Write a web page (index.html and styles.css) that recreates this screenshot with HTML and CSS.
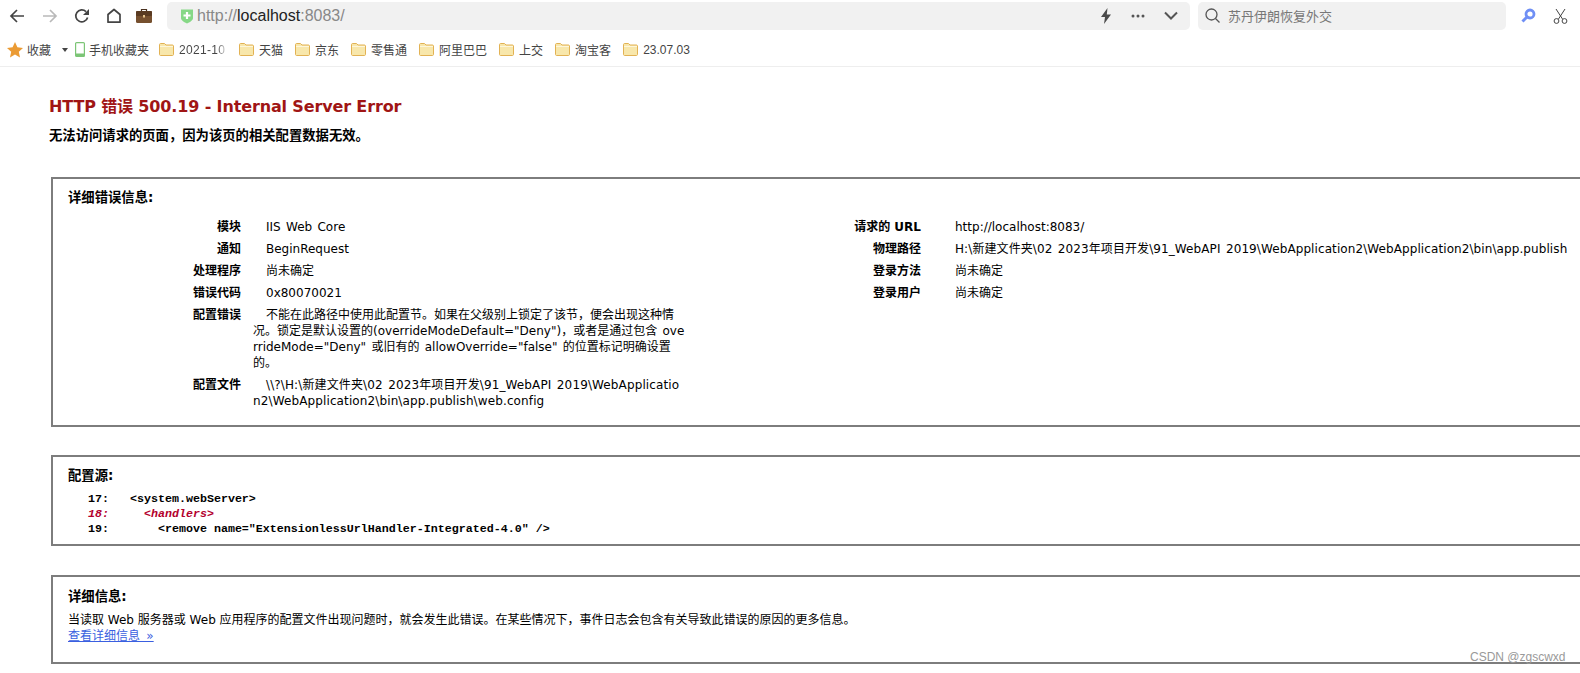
FILE: index.html
```html
<!DOCTYPE html>
<html lang="zh-CN">
<head>
<meta charset="utf-8">
<title>IIS 详细错误 - 500.19 - Internal Server Error</title>
<link rel="stylesheet" href="styles.css">
</head>
<body>
<svg class="defs" width="0" height="0" aria-hidden="true"><symbol id="folder" viewBox="0 0 15 13"><path d="M.5 1.500C.5 1 1 .5 1.500.5h4L7 2h6.500c.5 0 1 .5 1 1v8.500c0 .5-.5 1-1 1h-12c-.5 0-1-.5-1-1z" fill="#f8e7ab" stroke="#e2b254"/><path d="M1 3.500h13" stroke="#fdf6dc"/></symbol></svg>
<header class="chrome">
  <div class="toolbar">
    <svg class="nav nav-back" viewBox="0 0 16 16"><path d="M15 8H2M8 2 2 8l6 6" fill="none" stroke="#444" stroke-width="1.7"/></svg>
    <svg class="nav nav-forward" viewBox="0 0 16 16"><path d="M1 8h13M8 2l6 6-6 6" fill="none" stroke="#b9b9b9" stroke-width="1.7"/></svg>
    <svg class="nav nav-reload" viewBox="0 0 16 16"><path d="M13.600 9.500A6 6 0 1 1 12 3.600" fill="none" stroke="#444" stroke-width="1.7"/><path d="M15 1v6H9z" fill="#444"/></svg>
    <svg class="nav nav-home" viewBox="0 0 16 16"><path d="M2 14.200V6.500L8 1.500l6 5v7.700z" fill="none" stroke="#444" stroke-width="1.7" stroke-linejoin="round"/></svg>
    <svg class="nav nav-case" viewBox="0 0 16 16"><path d="M5.500 3V1.500h5V3" fill="none" stroke="#4a3220" stroke-width="1.200"/><rect x="0" y="3" width="16" height="12" rx="1.500" fill="#76502f"/><rect x="0" y="3" width="16" height="5" rx="1" fill="#5a3b22"/><rect x="7" y="7" width="2" height="2.500" fill="#e6c48c"/></svg>
    <div class="address">
      <svg class="shield" viewBox="0 0 14 16"><path d="M1 1.500h12v8.500c0 2.500-3.500 4.500-6 5.500-2.500-1-6-3-6-5.500z" fill="#86d886"/><path d="M7 4v7M3.500 7.500h7" stroke="#fff" stroke-width="2.200"/></svg>
      <span class="url"><span class="url-dim">http://</span>localhost<span class="url-dim">:8083/</span></span>
      <svg class="addr-icon addr-bolt" viewBox="0 0 12 16"><path d="M7.500 0 1 9h4l-1 7 7-9.500H6.800z" fill="#4a4a4a"/></svg>
      <svg class="addr-icon addr-dots" viewBox="0 0 14 4"><circle cx="2" cy="2" r="1.500" fill="#555"/><circle cx="7" cy="2" r="1.500" fill="#555"/><circle cx="12" cy="2" r="1.500" fill="#555"/></svg>
      <svg class="addr-icon addr-chev" viewBox="0 0 14 9"><path d="M1 1.500l6 6 6-6" fill="none" stroke="#555" stroke-width="2"/></svg>
    </div>
    <div class="search">
      <svg class="search-glass" viewBox="0 0 15 15"><circle cx="6.500" cy="6.500" r="5.500" fill="none" stroke="#555" stroke-width="1.300"/><path d="M10.500 10.500 14.500 14.500" stroke="#555" stroke-width="1.300"/></svg>
      <span class="search-text">苏丹伊朗恢复外交</span>
    </div>
    <svg class="tool tool-find" viewBox="0 0 15 15"><circle cx="9" cy="6" r="4" fill="none" stroke="#6f8ff5" stroke-width="2.800"/><path d="M6 9 1.500 13.500" stroke="#6f8ff5" stroke-width="3"/></svg>
    <svg class="tool tool-cut" viewBox="0 0 15 16"><path d="M3 1l6.500 10M12 1 5.500 11" fill="none" stroke="#444"/><circle cx="3.500" cy="13" r="2.400" fill="none" stroke="#444"/><circle cx="11.500" cy="13" r="2.400" fill="none" stroke="#444"/></svg>
  </div>
  <nav class="bookmarks">
    <svg class="star" viewBox="0 0 16 16"><path d="M8 0l2.400 5.300 5.600.6-4.200 3.800 1.200 5.800L8 12.500l-5 3 1.200-5.800L0 5.900l5.600-.6z" fill="#eb9b34"/></svg>
    <span class="bm-fav">收藏</span>
    <span class="caret"></span>
    <svg class="phone" viewBox="0 0 10 15"><rect x=".6" y=".6" width="8.800" height="13.800" rx="1" fill="none" stroke="#7cc576" stroke-width="1.200"/><rect x=".6" y="11.500" width="8.800" height="3" fill="#7cc576"/></svg>
    <span class="bm-mobile">手机收藏夹</span>
    <a class="folder"><svg class="folder-icon"><use href="#folder"/></svg><span class="fade">2021-10</span></a>
    <a class="folder"><svg class="folder-icon"><use href="#folder"/></svg>天猫</a>
    <a class="folder"><svg class="folder-icon"><use href="#folder"/></svg>京东</a>
    <a class="folder"><svg class="folder-icon"><use href="#folder"/></svg>零售通</a>
    <a class="folder"><svg class="folder-icon"><use href="#folder"/></svg>阿里巴巴</a>
    <a class="folder"><svg class="folder-icon"><use href="#folder"/></svg>上交</a>
    <a class="folder"><svg class="folder-icon"><use href="#folder"/></svg>淘宝客</a>
    <a class="folder"><svg class="folder-icon"><use href="#folder"/></svg>23.07.03</a>
  </nav>
</header>

<main class="page">
  <h1 class="title">HTTP 错误 500.19 - Internal Server Error</h1>
  <h2 class="subtitle">无法访问请求的页面，因为该页的相关配置数据无效。</h2>

  <section class="box box-detail">
    <h3 class="box-title">详细错误信息:</h3>
    <div class="info">
      <dl class="grid grid-left">
        <dt>模块</dt><dd class="ind">IIS Web Core</dd>
        <dt>通知</dt><dd class="ind">BeginRequest</dd>
        <dt>处理程序</dt><dd class="ind">尚未确定</dd>
        <dt>错误代码</dt><dd class="ind">0x80070021</dd>
        <dt>配置错误</dt><dd class="ind">不能在此路径中使用此配置节。如果在父级别上锁定了该节，便会出现这种情<br>况。锁定是默认设置的(overrideModeDefault="Deny")，或者是通过包含 ove<br>rrideMode="Deny" 或旧有的 allowOverride="false" 的位置标记明确设置<br>的。</dd>
        <dt>配置文件</dt><dd class="ind path-a">\\?\H:\新建文件夹\02 2023年项目开发\91_WebAPI 2019\WebApplicatio<br>n2\WebApplication2\bin\app.publish\web.config</dd>
      </dl>
      <dl class="grid grid-right">
        <dt>请求的 URL</dt><dd>http://localhost:8083/</dd>
        <dt>物理路径</dt><dd class="path-b">H:\新建文件夹\02 2023年项目开发\91_WebAPI 2019\WebApplication2\WebApplication2\bin\app.publish</dd>
        <dt>登录方法</dt><dd>尚未确定</dd>
        <dt>登录用户</dt><dd>尚未确定</dd>
      </dl>
    </div>
  </section>

  <section class="box box-source">
    <h3 class="box-title">配置源:</h3>
<pre class="code">   17:   &lt;system.webServer&gt;
<em class="code-err">   18:     &lt;handlers&gt;</em>
   19:       &lt;remove name="ExtensionlessUrlHandler-Integrated-4.0" /&gt;</pre>
  </section>

  <section class="box box-more">
    <h3 class="box-title">详细信息:</h3>
    <p class="more-text">当读取 Web 服务器或 Web 应用程序的配置文件出现问题时，就会发生此错误。在某些情况下，事件日志会包含有关导致此错误的原因的更多信息。</p>
    <a class="more-link">查看详细信息 »</a>
  </section>
</main>
<div class="watermark">CSDN @zgscwxd</div>
</body>
</html>
```
FILE: styles.css
```css
* { box-sizing: border-box; }
html, body { margin: 0; height: 673px; overflow: hidden; background: #fff; }
body { position: relative; font-family: "DejaVu Sans", "Noto Sans CJK SC", sans-serif; font-size: 12px; color: #000; }
.defs { position: absolute; }

.chrome { height: 67px; border-bottom: 1px solid #eeeeee; font-family: "Liberation Sans", "Noto Sans CJK SC", sans-serif; }
.toolbar { height: 30px; padding-top: 1px; display: flex; align-items: center; }
.nav { flex: none; height: 16px; width: 16px; }
.nav-back { margin-left: 9px; }
.nav-forward { margin-left: 17px; }
.nav-reload { margin-left: 16px; }
.nav-home { margin-left: 16px; }
.nav-case { margin-left: 14px; }
.address { margin-left: 15px; width: 1023px; height: 28px; background: #f1f1f1; border-radius: 5px; display: flex; align-items: center; padding-left: 13px; }
.shield { width: 14px; height: 16px; flex: none; }
.url { margin-left: 3px; font-size: 16px; color: #222; flex: 1; }
.url-dim { color: #888; }
.addr-icon { flex: none; }
.addr-bolt { width: 12px; height: 16px; }
.addr-dots { width: 14px; height: 4px; margin-left: 19px; }
.addr-chev { width: 14px; height: 9px; margin-left: 19px; margin-right: 12px; }
.search { margin-left: 8px; width: 308px; height: 28px; background: #f1f1f1; border-radius: 5px; display: flex; align-items: center; padding-left: 7px; }
.search-glass { width: 15px; height: 15px; flex: none; }
.search-text { margin-left: 8px; font-size: 13px; color: #777; }
.tool { flex: none; }
.tool-find { width: 15px; height: 15px; margin-left: 15px; }
.tool-cut { width: 15px; height: 16px; margin-left: 17px; }

.bookmarks { height: 36px; padding: 3px 0 0 7px; display: flex; align-items: center; font-size: 12px; color: #444; white-space: nowrap; }
.star { width: 16px; height: 16px; flex: none; }
.bm-fav { margin-left: 4px; }
.caret { margin-left: 11px; border-top: 4px solid #444; border-left: 3.500px solid transparent; border-right: 3.500px solid transparent; }
.phone { width: 10px; height: 15px; margin-left: 7px; flex: none; }
.bm-mobile { margin-left: 4px; }
.folder { display: flex; align-items: center; margin-left: 12px; }
.bm-mobile + .folder { margin-left: 10px; }
.folder-icon { width: 15px; height: 13px; margin-right: 5px; flex: none; }
.fade { display: block; width: 48px; letter-spacing: .3px; overflow: hidden; background: linear-gradient(90deg, #444 78%, #e4e4e4 100%); -webkit-background-clip: text; background-clip: text; color: transparent; }

.page { padding: 28px 0 0 50px; }
.title { margin: 0 0 0 -1px; font-size: 16px; line-height: 24px; font-weight: 700; letter-spacing: -.14px; color: #a01515; }
.subtitle { margin: 8px 0 0 -1px; font-size: 13.330px; line-height: 18px; font-weight: 700; }
.box { width: 1600px; margin-left: 1px; border: 2px solid #7d7d7d; padding: 10px 16px 0; }
.box-detail { margin-top: 32px; height: 250px; }
.box-source { margin-top: 28px; height: 91px; }
.box-more { margin-top: 29px; height: 89px; padding-top: 11px; }
.box-title { margin: 0 0 0 -1px; font-size: 13.330px; line-height: 18px; font-weight: 700; }

.info { display: flex; margin-top: 12px; }
.grid { margin: 0; display: grid; row-gap: 6px; align-content: start; line-height: 16px; }
.grid dt { font-weight: 700; text-align: right; }
.grid dd { margin: 0; white-space: nowrap; word-spacing: 1.500px; }
.grid .ind { text-indent: 13px; }
.grid .path-a { letter-spacing: .12px; }
.grid .path-b { letter-spacing: .09px; }
.grid-left { grid-template-columns: 172px 432px; column-gap: 12px; }
.grid-right { grid-template-columns: 120px auto; column-gap: 34px; margin-left: 116px; }

.code { margin: 7px 0 0 -2px; font-family: "Liberation Mono", monospace; font-size: 11.670px; line-height: 15px; font-weight: 700; }
.code-err { color: #b3002d; font-style: italic; }

.more-text { margin: 7px 0 0 -1px; line-height: 15px; }
.more-link { display: block; margin-left: -1px; line-height: 17px; word-spacing: 2.500px; color: #3a5fe0; text-decoration: underline; }

.watermark { position: absolute; left: 1470px; top: 650px; font-family: "Liberation Sans", sans-serif; font-size: 12px; line-height: 14px; color: #999; }
```
